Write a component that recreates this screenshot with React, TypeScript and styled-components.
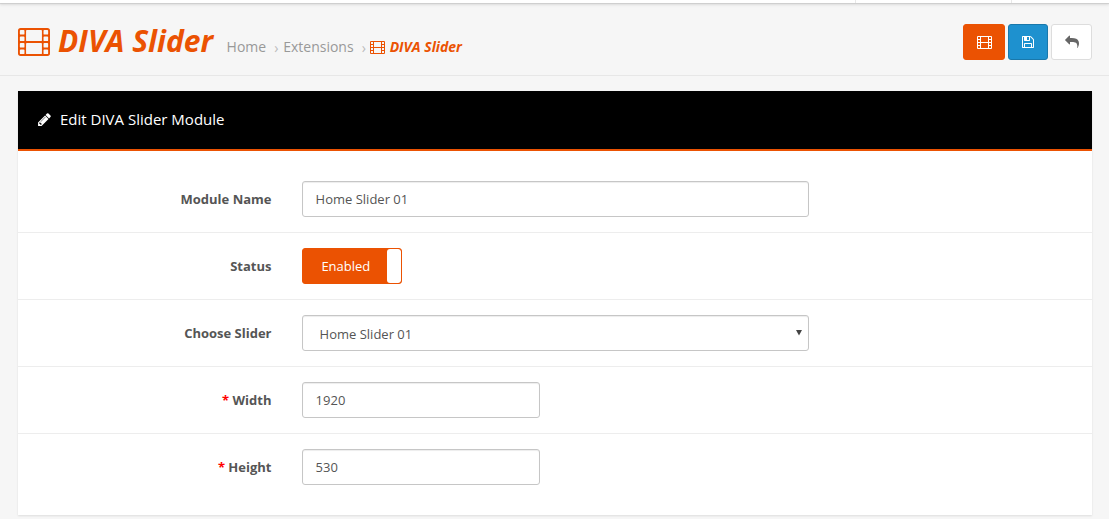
import React from "react";
import styled, { createGlobalStyle } from "styled-components";

const ORANGE = "#eb5202";

const GlobalStyle = createGlobalStyle`
  *, *::before, *::after { box-sizing: border-box; }
  html, body { margin: 0; padding: 0; height: 100%; overflow: hidden; }
  body {
    background: #f6f6f6;
    color: #555;
    font-family: "Open Sans", "Liberation Sans", sans-serif;
    font-size: 13px;
    line-height: 20px;
  }
`;

const TopBar = styled.div`
  display: flex;
  justify-content: flex-end;
  height: 3px;
  background: #fff;
  box-shadow: 0 1px 1px #ccc, 0 2px 3px rgba(0, 0, 0, 0.1);
`;

const TopBarItem = styled.div<{ $width: number }>`
  width: ${(p) => p.$width}px;
  border-left: 1px solid #e8e8e8;
`;

const PageHeader = styled.header`
  display: flex;
  justify-content: space-between;
  height: 73px;
  padding: 21px 17px 0 18px;
  border-bottom: 1px solid #e7e7e7;
`;

const HeaderLeft = styled.div`
  display: flex;
`;

const Title = styled.h1`
  display: flex;
  margin: 0;
  color: ${ORANGE};
  font-size: 30px;
  font-weight: 700;
  font-style: italic;
  line-height: 34px;
  white-space: nowrap;

  svg { margin: 4px 8px 0 0; }
`;

const Breadcrumb = styled.nav`
  display: flex;
  margin: 13px 0 0 13.5px;
  color: #999;
  font-size: 14px;
  line-height: 20px;
  white-space: nowrap;
`;

const Separator = styled.span`
  width: 17px;
  padding-left: 8px;
  color: #bbb;
  line-height: 21px;
`;

const Current = styled.span`
  display: flex;
  color: ${ORANGE};
  font-weight: 700;
  font-style: italic;

  svg { margin: 4px 4.6px 0 -0.6px; }
`;

const Actions = styled.div`
  display: flex;
  gap: 3px;
`;

const ActionButton = styled.button<{ $bg: string; $border: string; $fg: string; $width: number }>`
  display: flex;
  align-items: center;
  justify-content: center;
  width: ${(p) => p.$width}px;
  height: 36px;
  padding: 0;
  border: 1px solid ${(p) => p.$border};
  border-radius: 3px;
  background: ${(p) => p.$bg};
  color: ${(p) => p.$fg};
`;

const FilmButton = styled(ActionButton)`
  padding: 1px 0 0 1px;
`;

const Panel = styled.section`
  width: 1074px;
  margin: 15px 0 0 18px;
  background: #fff;
  box-shadow: 0 1px 2px rgba(0, 0, 0, 0.1);
`;

const PanelHeading = styled.h3`
  display: flex;
  align-items: center;
  height: 60px;
  margin: 0;
  padding: 0 19px 2px;
  border-bottom: 2px solid ${ORANGE};
  background: #000;
  color: #fff;
  font-size: 15px;
  font-weight: 400;

  svg { margin-right: 8px; }
`;

const Form = styled.div`
  padding: 15px 0;
`;

const Row = styled.div`
  display: grid;
  grid-template-columns: 253.5px 1fr;
  column-gap: 30.5px;
  padding: 15px 0;

  & + & { border-top: 1px solid #ededed; }
`;

const Label = styled.label`
  padding-top: 8px;
  color: #555;
  font-weight: 700;
  text-align: right;
`;

const Required = styled.span`
  margin-right: 3.4px;
  color: #f00;
`;

const Field = styled.div<{ $width: number }>`
  display: flex;
  width: ${(p) => p.$width}px;
  height: 36px;
  padding: 7px 12.6px;
  border: 1px solid #c6c6c6;
  border-radius: 3px;
  box-shadow: inset 0 1px 1px rgba(0, 0, 0, 0.075);
  background: #fff;
  color: #555;
`;

const SelectField = styled(Field)`
  justify-content: space-between;
  padding: 8px 5px 8px 16.6px;

  svg { margin-top: 5px; }
`;

const Toggle = styled.div`
  display: flex;
  width: 100px;
  height: 36px;
  border: 1px solid ${ORANGE};
  border-radius: 3px;
  overflow: hidden;
  background: ${ORANGE};
  color: #fff;
`;

const ToggleText = styled.span`
  flex: 1;
  padding: 7px 0 0 18.4px;
`;

const ToggleHandle = styled.span`
  width: 14px;
  border-radius: 3px;
  background: #fff;
`;

const FilmIcon = () => {
  const hole = (x: number, y: number, w: number, h: number) =>
    `M${x + 50} ${y}h${w - 100}q50 0 50 50v${h - 100}q0 50-50 50h${100 - w}q-50 0-50-50v${100 - h}q0-50 50-50z`;
  const rows = [112, 500, 888, 1276];
  const d = [
    "M160 0h1600q160 0 160 160v1344q0 160-160 160h-1600q-160 0-160-160v-1344q0-160 160-160z",
    ...rows.map((y) => hole(112, y, 276, 276)),
    ...rows.map((y) => hole(1532, y, 276, 276)),
    hole(484, 112, 952, 664),
    hole(484, 888, 952, 664),
  ].join("");
  return (
    <svg width="32" height="28" viewBox="0 0 1920 1664" preserveAspectRatio="none" fill="currentColor">
      <path fillRule="evenodd" d={d} />
    </svg>
  );
};

/* Small film strip on a 15x13 pixel grid, one-pixel strokes. */
const SmallFilmIcon = () => {
  const rows = [1, 4, 7, 10];
  const d = [
    "M1 0h13q1 0 1 1v11q0 1-1 1h-13q-1 0-1-1v-11q0-1 1-1z",
    ...rows.map((y) => `M1 ${y}h2v2h-2zM12 ${y}h2v2h-2z`),
    "M4 1h7v5h-7zM4 7h7v5h-7z",
  ].join("");
  return (
    <svg width="15" height="13" viewBox="0 0 15 13" fill="currentColor">
      <path fillRule="evenodd" d={d} />
    </svg>
  );
};

const Glyph = ({ d, size = 14 }: { d: string; size?: number }) => (
  <svg width={size} height={size} viewBox="0 0 1792 1792" fill="currentColor">
    <path d={d} />
  </svg>
);

const PENCIL =
  "M491 1536l91-91-235-235-91 91v107h128v128h107zm523-928q0-22-22-22-10 0-17 7l-542 542q-7 7-7 17 0 22 22 22 10 0 17-7l542-542q7-7 7-17zm-54-192l416 416-832 832h-416v-416zm683 96q0 53-37 90l-166 166-416-416 166-165q36-38 90-38 53 0 91 38l235 234q37 39 37 91z";
const SAVE =
  "M512 1536h768v-384h-768v384zm896 0h128v-896q0-14-10-38.5t-20-34.5l-281-281q-10-10-34-20t-39-10v416q0 40-28 68t-68 28h-576q-40 0-68-28t-28-68v-416h-128v1280h128v-416q0-40 28-68t68-28h832q40 0 68 28t28 68v416zm-384-928v-320q0-13-9.5-22.5t-22.5-9.5h-192q-13 0-22.5 9.5t-9.5 22.5v320q0 13 9.5 22.5t22.5 9.5h192q13 0 22.5-9.5t9.5-22.5zm640 32v928q0 40-28 68t-68 28h-1344q-40 0-68-28t-28-68v-1344q0-40 28-68t68-28h928q40 0 88 20t76 48l280 280q28 28 48 76t20 88z";
const REPLY =
  "M1792 1120q0 166-127 451-3 7-10.5 24t-13.5 30-13 22q-12 17-28 17-15 0-23.5-10t-8.5-25q0-9 2.5-26.5t2.5-23.5q5-68 5-123 0-101-17.5-181t-48.5-138.5-80-101-105.5-69.5-133-42.5-154-21.5-175.5-6h-224v256q0 26-19 45t-45 19-45-19l-512-512q-19-19-19-45t19-45l512-512q19-19 45-19t45 19 19 45v256h224q713 0 875 403 53 134 53 333z";

export default function App() {
  return (
    <>
      <GlobalStyle />
      <TopBar>
        <TopBarItem $width={156} />
        <TopBarItem $width={98} />
      </TopBar>
      <PageHeader>
        <HeaderLeft>
          <Title>
            <FilmIcon />
            DIVA Slider
          </Title>
          <Breadcrumb>
            <span>Home</span>
            <Separator>›</Separator>
            <span>Extensions</span>
            <Separator>›</Separator>
            <Current>
              <SmallFilmIcon />
              DIVA Slider
            </Current>
          </Breadcrumb>
        </HeaderLeft>
        <Actions>
          <FilmButton $width={42} $bg={ORANGE} $border={ORANGE} $fg="#fff">
            <SmallFilmIcon />
          </FilmButton>
          <ActionButton $width={40} $bg="#1e91cf" $border="#1978ab" $fg="#fff">
            <Glyph d={SAVE} />
          </ActionButton>
          <ActionButton $width={41} $bg="#fff" $border="#ddd" $fg="#666">
            <Glyph d={REPLY} />
          </ActionButton>
        </Actions>
      </PageHeader>
      <Panel>
        <PanelHeading>
          <Glyph d={PENCIL} size={15} />
          Edit DIVA Slider Module
        </PanelHeading>
        <Form>
          <Row>
            <Label>Module Name</Label>
            <Field $width={507}>Home Slider 01</Field>
          </Row>
          <Row>
            <Label>Status</Label>
            <Toggle>
              <ToggleText>Enabled</ToggleText>
              <ToggleHandle />
            </Toggle>
          </Row>
          <Row>
            <Label>Choose Slider</Label>
            <SelectField $width={507}>
              Home Slider 01
              <svg width="8" height="7" viewBox="0 0 8 7" fill="#444">
                <path d="M1 1h6L4 6.5z" />
              </svg>
            </SelectField>
          </Row>
          <Row>
            <Label>
              <Required>*</Required>Width
            </Label>
            <Field $width={238}>1920</Field>
          </Row>
          <Row>
            <Label>
              <Required>*</Required>Height
            </Label>
            <Field $width={238}>530</Field>
          </Row>
        </Form>
      </Panel>
    </>
  );
}
